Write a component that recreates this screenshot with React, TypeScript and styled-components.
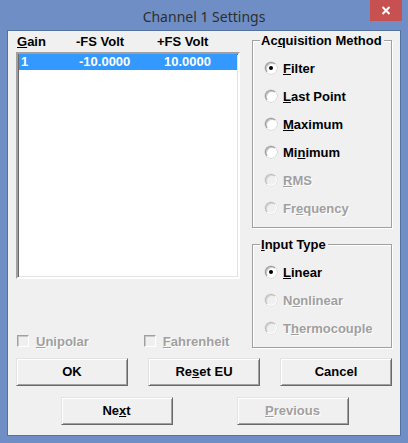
import React from 'react'
import styled, { createGlobalStyle } from 'styled-components'

const GlobalStyle = createGlobalStyle`
  html, body {
    margin: 0;
    padding: 0;
    background: #6f8ec5;
  }
  body {
    font-family: "Liberation Sans", Arial, sans-serif;
  }
`

const Window = styled.div`
  width: 408px;
  height: 443px;
  background: #6f8ec5;
  box-sizing: border-box;
  padding: 0 7px 7px 7px;
  display: flex;
  flex-direction: column;
`

const TitleBar = styled.div`
  position: relative;
  height: 30px;
  display: flex;
  align-items: center;
  justify-content: center;
`

const Title = styled.span`
  font-family: "Noto Sans", "Open Sans", sans-serif;
  font-size: 14px;
  color: #2e2e2e;
  margin-top: 2px;
`

const CloseButton = styled.div`
  position: absolute;
  top: 0;
  right: -1px;
  width: 32px;
  height: 21px;
  background: #c75050;
  display: flex;
  align-items: center;
  justify-content: center;
`

const Client = styled.div`
  flex: 1;
  border: 1px solid #55729f;
  background: #f0f0f0;
  display: flex;
  flex-direction: column;
`

const TopArea = styled.div`
  display: flex;
  align-items: flex-start;
  gap: 12px;
  padding: 0 8px 0 8px;
`

const LeftColumn = styled.div`
  width: 224px;
  display: flex;
  flex-direction: column;
`

const Text = styled.span<{ $disabled?: boolean }>`
  font-size: 13px;
  font-weight: bold;
  line-height: 15px;
  color: ${(p) => (p.$disabled ? '#a0a0a0' : '#000')};
  text-shadow: ${(p) => (p.$disabled ? '1px 1px 0 #fff' : 'none')};
  white-space: nowrap;
`

const ListHeader = styled.div`
  height: 21px;
  box-sizing: border-box;
  padding-top: 3px;
  display: grid;
  grid-template-columns: 59px 81px 1fr;
  padding-left: 1px;
`

const ListBox = styled.div`
  height: 227px;
  box-sizing: border-box;
  background: #fff;
  border-style: solid;
  border-width: 2px;
  border-color: #a0a0a0 #fff #fff #a0a0a0;
  box-shadow: inset 1px 1px 0 #696969, inset -1px -1px 0 #e3e3e3;
  padding: 0 1px 0 1px;
`

const ListRow = styled.div<{ $selected?: boolean }>`
  height: 16px;
  display: grid;
  grid-template-columns: 58px 85px 1fr;
  padding-left: 2px;
  background: ${(p) => (p.$selected ? '#3399ff' : 'transparent')};
  align-items: center;
`

const RowText = styled(Text)<{ $selected?: boolean }>`
  color: ${(p) => (p.$selected ? '#fff' : '#000')};
  line-height: 16px;
`

const CheckRow = styled.div`
  margin-top: 55px;
  height: 14px;
  display: flex;
  align-items: center;
`

const CheckItem = styled.div<{ $width: number }>`
  width: ${(p) => p.$width}px;
  display: flex;
  align-items: center;
  gap: 7px;
  padding-left: 1px;
`

const CheckBox = styled.span`
  width: 12px;
  height: 12px;
  box-sizing: border-box;
  border: 1px solid;
  border-color: #a0a0a0 #fff #fff #a0a0a0;
  box-shadow: inset 1px 1px 0 #c8c8c8;
  background: #f0f0f0;
`

const RightColumn = styled.div`
  width: 140px;
  display: flex;
  flex-direction: column;
  padding-top: 9px;
  gap: 16px;
`

const Group = styled.div<{ $height: number }>`
  position: relative;
  height: ${(p) => p.$height}px;
  box-sizing: border-box;
  border: 1px solid #a0a0a0;
  box-shadow: inset 1px 1px 0 #fff, 1px 1px 0 #fff;
  padding-top: 13px;
  display: flex;
  flex-direction: column;
`

const Legend = styled(Text)`
  position: absolute;
  top: -8px;
  left: 7px;
  padding: 0 2px 0 1px;
  background: #f0f0f0;
`

const RadioRow = styled.div`
  height: 28px;
  display: flex;
  align-items: center;
  padding-left: 12px;
  gap: 6px;
`

const Radio = styled.span<{ $checked?: boolean; $disabled?: boolean }>`
  width: 12px;
  height: 12px;
  box-sizing: border-box;
  border-radius: 50%;
  border: 1px solid ${(p) => (p.$disabled ? '#bdbdbd' : '#9a9a9a')};
  border-bottom-color: #fff;
  border-right-color: #fff;
  background: ${(p) => (p.$disabled ? '#f0f0f0' : '#fff')};
  box-shadow: inset 1px 1px 0 ${(p) => (p.$disabled ? '#d4d4d4' : '#c8c8c8')},
    0 0 0 0.5px ${(p) => (p.$disabled ? '#d8d8d8' : '#c4c4c4')};
  display: flex;
  align-items: center;
  justify-content: center;
  &::after {
    content: '';
    width: 4px;
    height: 4px;
    border-radius: 50%;
    background: #000;
    display: ${(p) => (p.$checked ? 'block' : 'none')};
  }
`

const ButtonRow = styled.div<{ $top: number; $centered?: boolean }>`
  margin-top: ${(p) => p.$top}px;
  display: flex;
  gap: ${(p) => (p.$centered ? 64 : 20)}px;
  padding-left: ${(p) => (p.$centered ? 1 : 8)}px;
  justify-content: ${(p) => (p.$centered ? 'center' : 'flex-start')};
`

const Button = styled.div`
  width: 112px;
  height: 28px;
  box-sizing: border-box;
  background: #f0f0f0;
  border: 1px solid;
  border-color: #e3e3e3 #696969 #696969 #e3e3e3;
  box-shadow: inset 1px 1px 0 #fff, inset -1px -1px 0 #a0a0a0;
  display: flex;
  align-items: center;
  justify-content: center;
  padding-bottom: 1px;
`

const CloseIcon = () => (
  <svg width="10" height="9" viewBox="0 0 10 9">
    <path d="M1.5 1 L8.5 8 M8.5 1 L1.5 8" stroke="#fff" strokeWidth="2" />
  </svg>
)

const acquisition = [
  { pre: '', key: 'F', post: 'ilter', checked: true },
  { pre: '', key: 'L', post: 'ast Point' },
  { pre: '', key: 'M', post: 'aximum' },
  { pre: 'Mi', key: 'n', post: 'imum' },
  { pre: '', key: 'R', post: 'MS', disabled: true },
  { pre: 'Fr', key: 'e', post: 'quency', disabled: true },
]

const inputTypes = [
  { pre: '', key: 'L', post: 'inear', checked: true },
  { pre: 'N', key: 'o', post: 'nlinear', disabled: true },
  { pre: 'T', key: 'h', post: 'ermocouple', disabled: true },
]

type Opt = { pre: string; key: string; post: string; checked?: boolean; disabled?: boolean }

const RadioOption: React.FC<{ opt: Opt }> = ({ opt }) => (
  <RadioRow>
    <Radio $checked={opt.checked} $disabled={opt.disabled} />
    <Text $disabled={opt.disabled}>
      {opt.pre}
      <u>{opt.key}</u>
      {opt.post}
    </Text>
  </RadioRow>
)

export default function App() {
  return (
    <>
      <GlobalStyle />
      <Window>
        <TitleBar>
          <Title>Channel 1 Settings</Title>
          <CloseButton>
            <CloseIcon />
          </CloseButton>
        </TitleBar>
        <Client>
          <TopArea>
            <LeftColumn>
              <ListHeader>
                <Text>
                  <u>G</u>ain
                </Text>
                <Text>-FS Volt</Text>
                <Text>+FS Volt</Text>
              </ListHeader>
              <ListBox>
                <ListRow $selected>
                  <RowText $selected>1</RowText>
                  <RowText $selected>-10.0000</RowText>
                  <RowText $selected>10.0000</RowText>
                </ListRow>
              </ListBox>
              <CheckRow>
                <CheckItem $width={127}>
                  <CheckBox />
                  <Text $disabled>
                    <u>U</u>nipolar
                  </Text>
                </CheckItem>
                <CheckItem $width={97}>
                  <CheckBox />
                  <Text $disabled>
                    <u>F</u>ahrenheit
                  </Text>
                </CheckItem>
              </CheckRow>
            </LeftColumn>
            <RightColumn>
              <Group $height={188}>
                <Legend>
                  Ac<u>q</u>uisition Method
                </Legend>
                {acquisition.map((o) => (
                  <RadioOption key={o.pre + o.key + o.post} opt={o} />
                ))}
              </Group>
              <Group $height={104}>
                <Legend>
                  <u>I</u>nput Type
                </Legend>
                {inputTypes.map((o) => (
                  <RadioOption key={o.pre + o.key + o.post} opt={o} />
                ))}
              </Group>
            </RightColumn>
          </TopArea>
          <ButtonRow $top={10}>
            <Button>
              <Text>OK</Text>
            </Button>
            <Button>
              <Text>
                Re<u>s</u>et EU
              </Text>
            </Button>
            <Button>
              <Text>Cancel</Text>
            </Button>
          </ButtonRow>
          <ButtonRow $top={11} $centered>
            <Button>
              <Text>
                Ne<u>x</u>t
              </Text>
            </Button>
            <Button>
              <Text $disabled>
                <u>P</u>revious
              </Text>
            </Button>
          </ButtonRow>
        </Client>
      </Window>
    </>
  )
}
